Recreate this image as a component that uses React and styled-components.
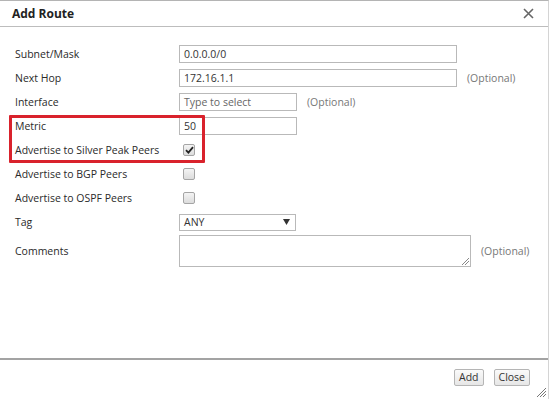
import React from "react";
import styled, { createGlobalStyle } from "styled-components";

const Global = createGlobalStyle`
  html, body { margin: 0; padding: 0; background: #fff; }
  body { font-family: "Open Sans", "DejaVu Sans", sans-serif; color: #333; }
  *, *::before, *::after { box-sizing: border-box; }
`;

const Dialog = styled.div`
  width: 549px;
  height: 399px;
  border-top: 1px solid #b4b4b4;
  border-right: 1px solid #d4d4d4;
  display: flex;
  flex-direction: column;
  position: relative;
  background: #fff;
`;

const Header = styled.div`
  height: 26px;
  flex: none;
  border-bottom: 1px solid #bdbdbd;
  display: flex;
  align-items: center;
  justify-content: space-between;
  padding: 0 12px 1px 12px;
`;

const Title = styled.div`
  font-size: 12px;
  font-weight: 700;
  color: #222;
`;

const CloseX = styled.div`
  width: 11px;
  height: 11px;
  margin-right: 2px;
  display: flex;
`;

const Body = styled.div`
  flex: 1;
  padding: 15px 0 0 15px;
  display: flex;
  flex-direction: column;
`;

const Row = styled.div`
  display: grid;
  grid-template-columns: 164px auto auto;
  justify-content: start;
  align-items: center;
  min-height: 24px;
`;

const Label = styled.div`
  font-size: 10.5px;
  color: #2a2a2a;
  white-space: nowrap;
`;

const Input = styled.div`
  width: ${(p) => p.$w}px;
  height: 18px;
  border: 1px solid #b9b9b9;
  font-size: 10.5px;
  line-height: 16px;
  padding: 0 4px;
  color: ${(p) => (p.$placeholder ? "#666" : "#333")};
  background: #fff;
`;

const Optional = styled.div`
  font-size: 10.5px;
  color: #777;
  margin-left: 10px;
`;

const Check = styled.div`
  width: 12px;
  height: 12px;
  margin-left: 4px;
  border: 1px solid #a5a5a5;
  border-radius: 2px;
  background: linear-gradient(#f4f4f4, #dcdcdc);
  display: flex;
  align-items: center;
  justify-content: center;
`;

const Select = styled.div`
  width: 117px;
  height: 17px;
  border: 1px solid #b9b9b9;
  font-size: 10.5px;
  padding: 0 5px 0 4px;
  display: flex;
  align-items: center;
  justify-content: space-between;
  color: #333;
`;

const TextArea = styled.div`
  width: 292px;
  height: 32px;
  margin-top: 1px;
  border: 1px solid #b9b9b9;
  position: relative;
`;

const Grip = styled.svg`
  position: absolute;
  right: 1px;
  bottom: 1px;
`;

const Group = styled.div`
  position: relative;
  display: flex;
  flex-direction: column;
  &::after {
    content: "";
    position: absolute;
    left: -6px;
    top: 1px;
    width: 196px;
    height: 48px;
    border: 3px solid #d9222c;
    border-radius: 1px;
    pointer-events: none;
  }
`;

const Footer = styled.div`
  height: 41px;
  flex: none;
  border-top: 2px solid #a3a3a3;
  display: flex;
  justify-content: flex-end;
  align-items: flex-start;
  padding: 9px 18px 0 0;
  gap: 10px;
  position: relative;
`;

const Button = styled.button`
  font-family: "Open Sans", "DejaVu Sans", sans-serif;
  font-size: 10.5px;
  height: 17px;
  padding: 0 4px;
  border: 1px solid #b5b5b5;
  border-radius: 2px;
  background: linear-gradient(#fafafa, #e6e6e6);
  color: #333;
  line-height: 15px;
`;

const CornerGrip = styled.svg`
  position: absolute;
  right: 2px;
  bottom: 2px;
`;

const CheckMark = () => (
  <svg width="9" height="8" viewBox="0 0 9 8">
    <path d="M1 4.2 L3.4 6.6 L8 1.2" fill="none" stroke="#222" strokeWidth="1.8" />
  </svg>
);

export default function App() {
  return (
    <>
      <Global />
      <Dialog>
        <Header>
          <Title>Add Route</Title>
          <CloseX>
            <svg width="11" height="11" viewBox="0 0 11 11">
              <path d="M1 1 L10 10 M10 1 L1 10" stroke="#666" strokeWidth="1.6" />
            </svg>
          </CloseX>
        </Header>
        <Body>
          <Row>
            <Label>Subnet/Mask</Label>
            <Input $w={278}>0.0.0.0/0</Input>
          </Row>
          <Row>
            <Label>Next Hop</Label>
            <Input $w={278}>172.16.1.1</Input>
            <Optional>(Optional)</Optional>
          </Row>
          <Row>
            <Label>Interface</Label>
            <Input $w={118} $placeholder>Type to select</Input>
            <Optional>(Optional)</Optional>
          </Row>
          <Group>
            <Row>
              <Label>Metric</Label>
              <Input $w={118}>50</Input>
            </Row>
            <Row>
              <Label>Advertise to Silver Peak Peers</Label>
              <Check>
                <CheckMark />
              </Check>
            </Row>
          </Group>
          <Row>
            <Label>Advertise to BGP Peers</Label>
            <Check />
          </Row>
          <Row>
            <Label>Advertise to OSPF Peers</Label>
            <Check />
          </Row>
          <Row>
            <Label>Tag</Label>
            <Select>
              <span>ANY</span>
              <svg width="7" height="6" viewBox="0 0 7 6">
                <path d="M0 0 H7 L3.5 6 Z" fill="#333" />
              </svg>
            </Select>
          </Row>
          <Row>
            <Label>Comments</Label>
            <TextArea>
              <Grip width="8" height="8" viewBox="0 0 8 8">
                <path d="M1 8 L8 1 M4 8 L8 4" stroke="#888" strokeWidth="1" />
              </Grip>
            </TextArea>
            <Optional>(Optional)</Optional>
          </Row>
        </Body>
        <Footer>
          <Button>Add</Button>
          <Button>Close</Button>
          <CornerGrip width="10" height="10" viewBox="0 0 10 10">
            <path d="M1 10 L10 1 M4 10 L10 4 M7 10 L10 7" stroke="#777" strokeWidth="1" />
          </CornerGrip>
        </Footer>
      </Dialog>
    </>
  );
}
